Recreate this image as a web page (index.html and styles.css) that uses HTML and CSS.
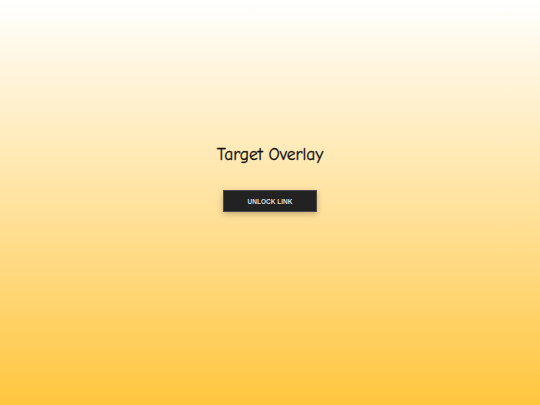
FILE: index.html
```html
<!DOCTYPE html>
<html>
<head>
<meta charset="utf-8">
<link rel="stylesheet" href="styles.css">
</head>
<body>
<main class="overlay">
  <h1 class="title">Target Overlay</h1>
  <button class="unlock">UNLOCK LINK</button>
</main>
</body>
</html>
```
FILE: styles.css
```css
html, body {
  margin: 0;
  padding: 0;
  height: 100%;
}
body {
  background: linear-gradient(to bottom, #ffffff 0%, #ffc63e 100%);
}
.overlay {
  height: 100%;
  display: flex;
  flex-direction: column;
  align-items: center;
  padding-top: 143px;
  box-sizing: border-box;
}
.title {
  margin: 0;
  font-family: "Comic Neue", cursive, "DejaVu Sans", sans-serif;
  font-weight: 400;
  font-size: 17.5px;
  line-height: 22px;
  color: #111111;
  -webkit-text-stroke: 0.3px #111111;
}
.unlock {
  margin-top: 25px;
  width: 94px;
  height: 22px;
  background: #222222;
  border: 1px solid #4a4a4a;
  box-shadow: 0 2px 6px rgba(0,0,0,0.25);
  color: #dcdcdc;
  font-family: "Liberation Sans", Arial, sans-serif;
  font-weight: 700;
  font-size: 6.5px;
  padding: 0;
  cursor: pointer;
}
```
